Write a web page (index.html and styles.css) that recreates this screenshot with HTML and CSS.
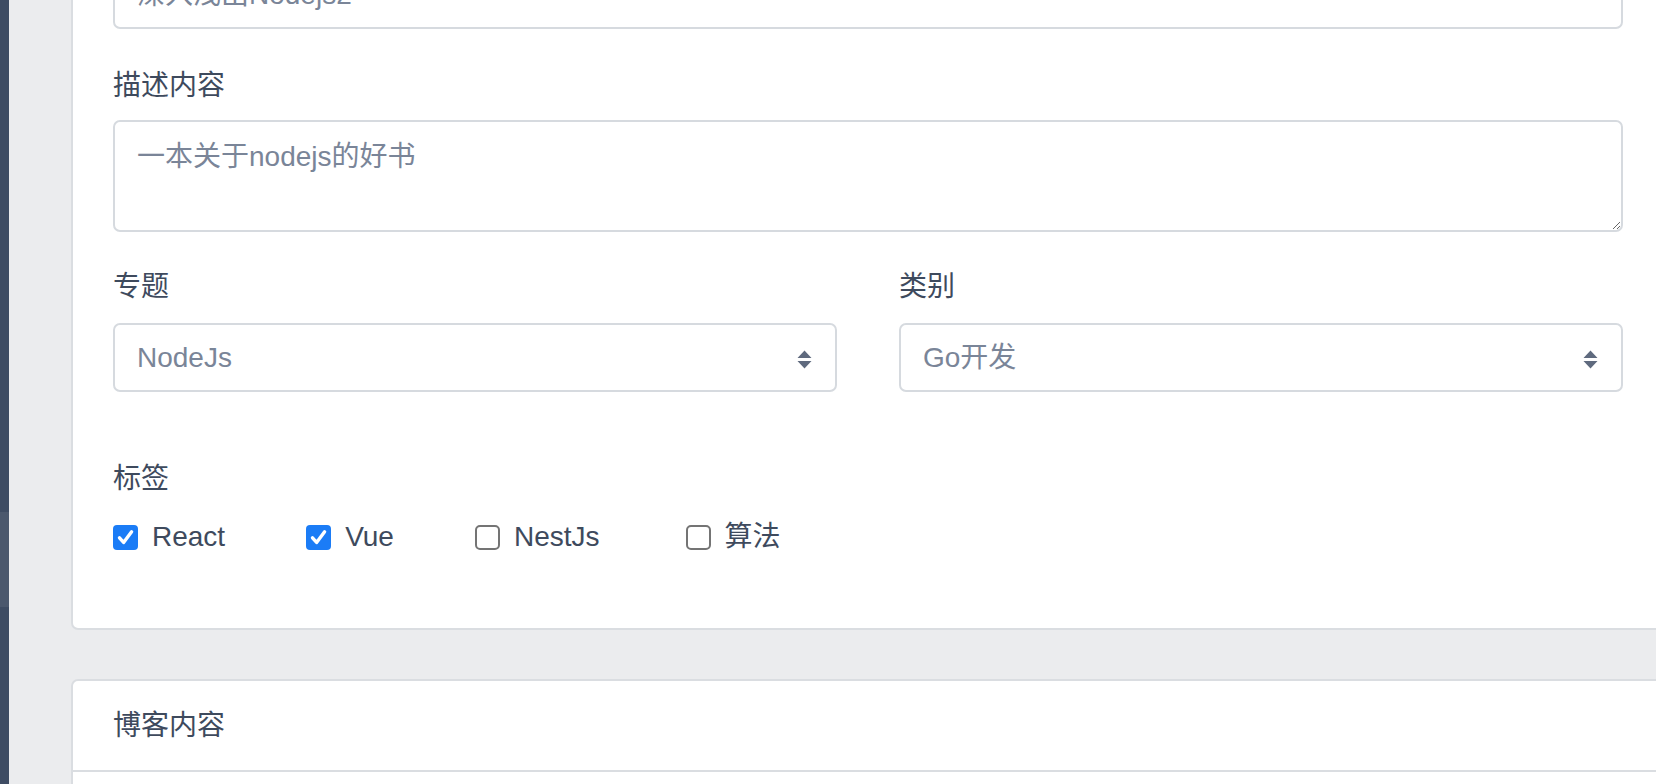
FILE: index.html
```html
<!DOCTYPE html>
<html lang="zh-CN">
<head>
<meta charset="utf-8">
<title>编辑博客</title>
<link rel="stylesheet" href="styles.css">
</head>
<body>
<div class="app">
  <aside class="sidebar"><div class="sidebar-active"></div></aside>
  <main class="main">
    <section class="card card-form">
      <div class="form-group">
        <label class="form-label">标题</label>
        <input class="form-control" type="text" placeholder="深入浅出Nodejs2">
      </div>
      <div class="form-group form-group-desc">
        <label class="form-label">描述内容</label>
        <textarea class="form-control textarea" placeholder="一本关于nodejs的好书"></textarea>
      </div>
      <div class="form-row">
        <div class="col">
          <label class="form-label">专题</label>
          <div class="select-wrap">
            <select class="form-control select"><option>NodeJs</option></select>
            <svg class="select-arrow" width="15" height="19" viewBox="0 0 15 19"><path d="M7.5 0.5 L14.5 8 L0.5 8 Z M0.5 11 L14.5 11 L7.5 18.5 Z" fill="#5f6a7e"/></svg>
          </div>
        </div>
        <div class="col">
          <label class="form-label">类别</label>
          <div class="select-wrap">
            <select class="form-control select"><option>Go开发</option></select>
            <svg class="select-arrow" width="15" height="19" viewBox="0 0 15 19"><path d="M7.5 0.5 L14.5 8 L0.5 8 Z M0.5 11 L14.5 11 L7.5 18.5 Z" fill="#5f6a7e"/></svg>
          </div>
        </div>
      </div>
      <div class="tags">
        <label class="form-label tags-label">标签</label>
        <div class="check-row">
          <label class="check">
            <span class="box checked"><svg width="25" height="25" viewBox="0 0 25 25"><path d="M6.5 12.8 L10.6 17.4 L18.6 6.8" fill="none" stroke="#fff" stroke-width="3.4" stroke-linecap="round" stroke-linejoin="round"/></svg></span>
            <span class="check-text">React</span>
          </label>
          <label class="check">
            <span class="box checked"><svg width="25" height="25" viewBox="0 0 25 25"><path d="M6.5 12.8 L10.6 17.4 L18.6 6.8" fill="none" stroke="#fff" stroke-width="3.4" stroke-linecap="round" stroke-linejoin="round"/></svg></span>
            <span class="check-text">Vue</span>
          </label>
          <label class="check check-wide">
            <span class="box"></span>
            <span class="check-text">NestJs</span>
          </label>
          <label class="check">
            <span class="box"></span>
            <span class="check-text">算法</span>
          </label>
        </div>
      </div>
    </section>
    <section class="card card-content">
      <div class="card-header">博客内容</div>
      <div class="card-body"></div>
    </section>
  </main>
</div>
</body>
</html>
```

FILE: styles.css
```css
* { box-sizing: border-box; }

html, body {
  margin: 0;
  height: 784px;
  overflow: hidden;
}

body {
  background: #ebecee;
  font-family: "Liberation Sans", "Noto Sans CJK SC", sans-serif;
  font-size: 28px;
  line-height: 42px;
  color: #3e4a5d;
}

.app {
  display: flex;
  height: 784px;
}

.sidebar {
  width: 9px;
  flex: none;
  background: #3e4c63;
  display: flex;
  flex-direction: column;
}

.sidebar-active {
  margin-top: 512px;
  height: 95px;
  background: #4b586d;
}

.main {
  flex: 1;
  min-width: 0;
  padding-left: 62px;
}

.card {
  background: #fff;
  border: 2px solid #dadde1;
  border-radius: 7px;
  margin-right: -9px;
}

.card-form {
  margin-top: -139px;
  padding: 40px 40px 70px;
}

.form-group {
  margin-bottom: 34px;
}

.form-label {
  display: block;
  margin-bottom: 15px;
  height: 42px;
  color: #3e4a5d;
}

.form-group-desc .form-label {
  padding-top: 2px;
}

.form-control {
  display: block;
  width: 100%;
  height: 69px;
  border: 2px solid #d6dadf;
  border-radius: 7px;
  background: #fff;
  padding: 0 22px;
  font: inherit;
  color: #7a8598;
  outline: none;
}

.form-control::placeholder {
  color: #7a8598;
  opacity: 1;
}

.textarea {
  height: 112px;
  padding: 14px 22px;
  line-height: 42px;
  resize: vertical;
}

.form-row {
  display: grid;
  grid-template-columns: 1fr 1fr;
  column-gap: 62px;
  margin-bottom: 66px;
}

.select-wrap {
  position: relative;
}

.select {
  appearance: none;
  -webkit-appearance: none;
}

.select-arrow {
  position: absolute;
  right: 25px;
  top: 27px;
  pointer-events: none;
}

.tags-label {
  margin-bottom: 16px;
}

.check-row {
  display: flex;
  align-items: center;
  height: 42px;
}

.check {
  display: flex;
  align-items: center;
  gap: 14px;
  margin-right: 81px;
  color: #3e4a5d;
}

.check-wide {
  margin-right: 86px;
}

.box {
  width: 25px;
  height: 25px;
  border: 2px solid #747474;
  border-radius: 5px;
  background: #fff;
  flex: none;
  display: block;
}

.box.checked {
  border: none;
  background: #1b7cf6;
  border-radius: 4px;
}

.box svg {
  display: block;
}

.card-content {
  margin-top: 49px;
}

.card-header {
  padding: 24px 40px 23px;
  border-bottom: 2px solid #dadde1;
  color: #3e4a5d;
}

.card-body {
  height: 200px;
}
```
